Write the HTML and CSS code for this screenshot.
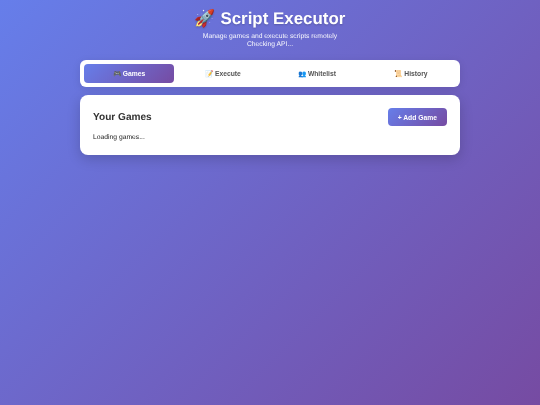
FILE: index.html
```html
<!DOCTYPE html>
<html lang="en">
<head>
    <meta charset="UTF-8">
    <meta name="viewport" content="width=device-width, initial-scale=1.0">
    <title>Script Executor</title>
    <link rel="stylesheet" href="styles.css">
</head>
<body>

<div class="container">
    <header class="header">
        <h1>🚀 Script Executor</h1>
        <p>Manage games and execute scripts remotely</p>
        <p>Checking API...</p>
    </header>

    <nav class="tabs">
        <button class="tab active">🎮 Games</button>
        <button class="tab">📝 Execute</button>
        <button class="tab">👥 Whitelist</button>
        <button class="tab">📜 History</button>
    </nav>

    <section class="card">
        <div class="card-header">
            <h2>Your Games</h2>
            <button class="btn">+ Add Game</button>
        </div>
        <p class="loading">Loading games...</p>
    </section>
</div>

</body>
</html>
```
FILE: styles.css
```css
* {
    box-sizing: border-box;
    margin: 0;
    padding: 0;
}
html, body {
    height: 100%;
}
body {
    font-family: "Liberation Sans", Arial, sans-serif;
    text-rendering: geometricPrecision;
    background: linear-gradient(135deg, #667eea 0%, #764ba2 100%);
    color: #222;
}
/* the reference is a downscaled capture, everything in it is a bit soft */
.container {
    width: 380px;
    margin: 0 auto;
    padding-top: 8px;
    filter: blur(0.3px);
}
.header {
    text-align: center;
    color: #fff;
    margin-bottom: 11px;
}
.header h1 {
    font-size: 16.9px;
    line-height: 21px;
    margin-bottom: 4px;
    text-shadow: 0 1px 2px rgba(0, 0, 0, 0.2);
}
.header p {
    font-size: 6.75px;
    line-height: 8px;
    opacity: 0.95;
}
.tabs {
    display: flex;
    gap: 4px;
    background: #fff;
    border-radius: 6px;
    padding: 4px;
    margin-bottom: 8px;
    box-shadow: 0 2px 8px rgba(0, 0, 0, 0.1);
}
.tab {
    flex: 1;
    height: 19px;
    border: none;
    border-radius: 4px;
    background: none;
    font-family: inherit;
    font-size: 6.75px;
    font-weight: bold;
    color: #555;
}
.tab.active {
    background: linear-gradient(135deg, #667eea 0%, #764ba2 100%);
    color: #fff;
}
.card {
    background: #fff;
    border-radius: 8px;
    padding: 13px;
    height: 60px;
    box-shadow: 0 4px 13px rgba(0, 0, 0, 0.18);
}
.card-header {
    display: flex;
    justify-content: space-between;
    align-items: center;
    margin-bottom: 8px;
}
.card-header h2 {
    font-size: 10.1px;
    color: #333;
}
.btn {
    height: 18px;
    padding: 0 10px;
    border: none;
    border-radius: 4px;
    background: linear-gradient(135deg, #667eea 0%, #764ba2 100%);
    color: #fff;
    font-family: inherit;
    font-size: 6.75px;
    font-weight: bold;
}
.loading {
    font-size: 6.75px;
    line-height: 8px;
}
```
